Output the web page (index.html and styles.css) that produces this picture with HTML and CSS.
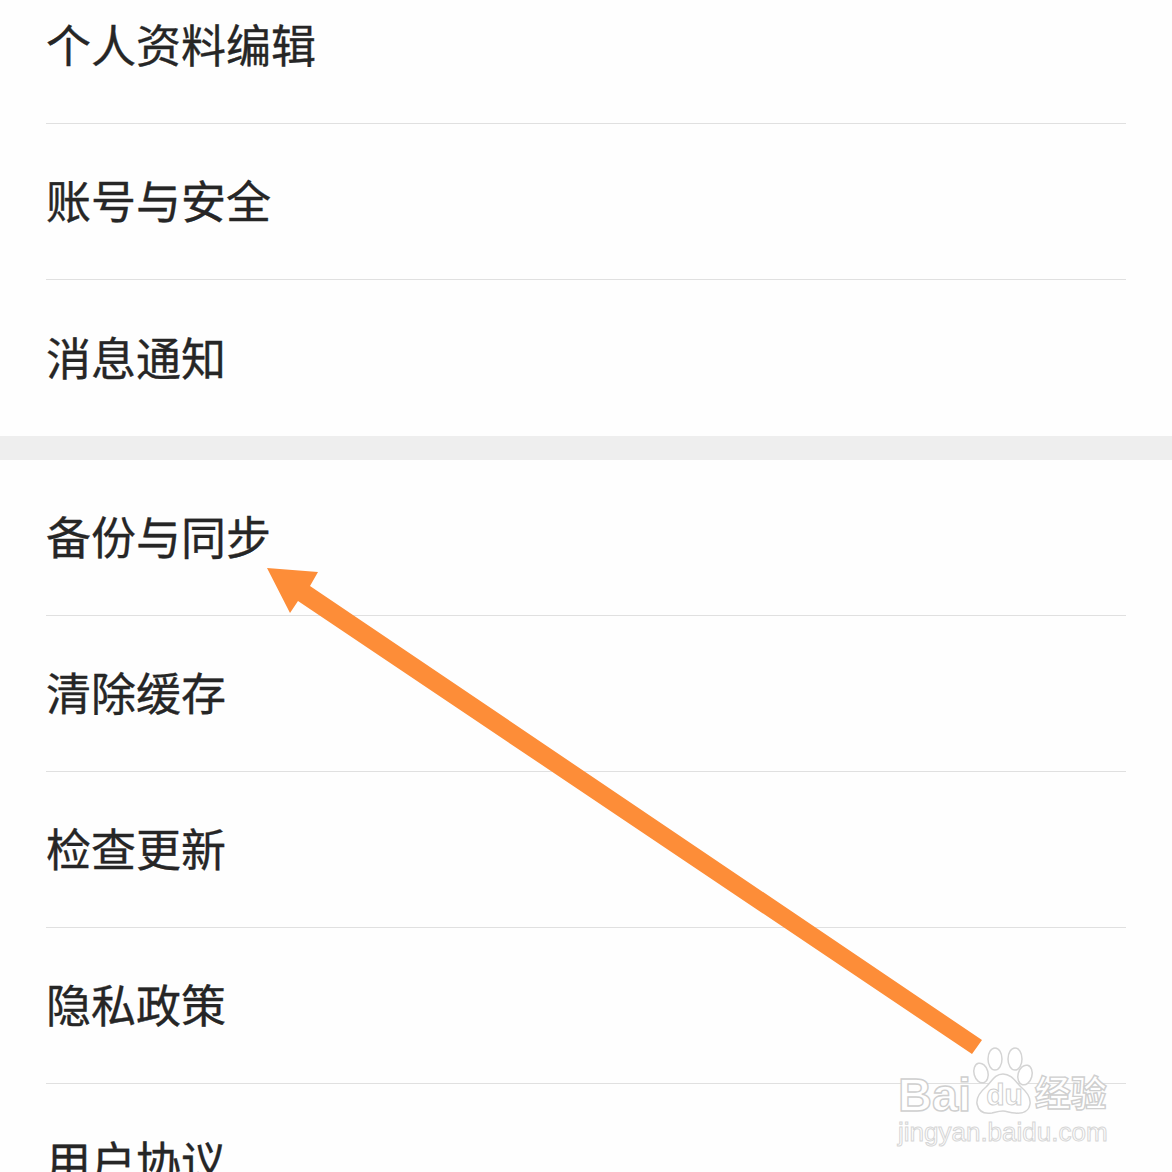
FILE: index.html
```html
<!DOCTYPE html>
<html lang="zh">
<head>
<meta charset="utf-8">
<title>设置</title>
<link rel="stylesheet" href="styles.css">
</head>
<body>
<div class="page">
  <section class="group first">
    <div class="row"><span>个人资料编辑</span></div>
    <div class="row"><span>账号与安全</span></div>
    <div class="row last"><span>消息通知</span></div>
  </section>
  <div class="divider"></div>
  <section class="group">
    <div class="row"><span>备份与同步</span></div>
    <div class="row"><span>清除缓存</span></div>
    <div class="row"><span>检查更新</span></div>
    <div class="row"><span>隐私政策</span></div>
    <div class="row last"><span>用户协议</span></div>
  </section>
  <svg class="arrow" width="1172" height="1172" viewBox="0 0 1172 1172">
    <path d="M972 1054 L982 1040 L310 586 L318 572 L267 568 L290 613 L298 601 Z" fill="#fd8d38"/>
  </svg>
  <div class="mark">
    <svg class="paw" width="62" height="72" viewBox="0 0 62 72">
      <g fill="#fff" stroke="#d4d4d4" stroke-width="1.5">
        <ellipse cx="9" cy="27" rx="7" ry="10" transform="rotate(-15 9 27)"/>
        <ellipse cx="23" cy="13" rx="7" ry="11"/>
        <ellipse cx="43" cy="13" rx="7" ry="11"/>
        <ellipse cx="53" cy="29" rx="7" ry="10" transform="rotate(15 53 29)"/>
        <path d="M31 28c-8 0-11 7-17 13-6 5-10 10-9 17 2 9 9 10 15 9 4-1 7-2 11-2s7 2 12 2c8 1 14-2 15-9 1-7-3-12-9-17-6-6-10-13-18-13z"/>
      </g>
    </svg>
    <div class="mark-title"><span class="bai">Bai</span><span class="du">du</span><span class="jy">经验</span></div>
    <div class="mark-url">jingyan.baidu.com</div>
  </div>
</div>
</body>
</html>
```
FILE: styles.css
```css
html, body { margin: 0; padding: 0; }
body { width: 1172px; height: 1172px; overflow: hidden; background: #fefefe; }
.page { position: relative; width: 1172px; height: 1172px; overflow: hidden; font-family: "Noto Sans CJK SC", "Noto Sans", sans-serif; color: #262626; }
.group { display: flex; flex-direction: column; padding: 0 46px; }
.group.first { margin-top: -32px; }
.row { box-sizing: border-box; height: 156px; display: flex; align-items: center; border-bottom: 1px solid #e0e0e0; font-size: 45px; line-height: 1; }
.row span { position: relative; top: -2px; -webkit-text-stroke: 0.35px #262626; }
.row.last { border-bottom: 0; }
.divider { height: 24px; background: #eeeeee; }
.arrow { position: absolute; left: 0; top: 0; }
.mark { position: absolute; left: 898px; top: 1046px; width: 220px; color: #fff; }
.paw { position: absolute; left: 74px; top: 0; }
.mark-title { position: absolute; left: 0; top: 26px; display: flex; align-items: center; font-family: "Liberation Sans", "Noto Sans CJK SC", sans-serif; font-weight: 700; line-height: 46px; white-space: nowrap; -webkit-text-stroke: 1.4px #cfcfcf; }
.bai { font-size: 47px; }
.du { font-size: 30px; margin-left: 15px; -webkit-text-stroke: 1px #cfcfcf; }
.jy { font-size: 36px; margin-left: 12px; }
.mark-url { position: absolute; left: 0; top: 73px; font-family: "Liberation Sans", sans-serif; font-size: 26px; line-height: 26px; color: #fff; -webkit-text-stroke: 1px #d6d6d6; white-space: nowrap; }
```
